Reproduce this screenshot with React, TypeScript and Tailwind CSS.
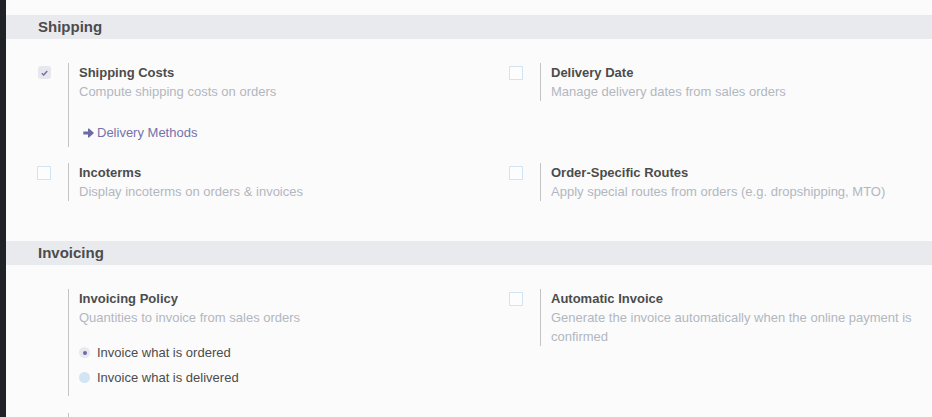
import React from "react";

function Check({ checked }: { checked?: boolean }) {
  if (checked) {
    return (
      <div className="mt-[3px] flex h-[13px] w-[13px] items-center justify-center rounded-[3px] bg-[#e7e8ee]">
        <svg width="7" height="6" viewBox="0 0 7 6">
          <path d="M0.8 3.2 L2.7 5 L6.2 1" fill="none" stroke="#6f6ea6" strokeWidth="1.4" />
        </svg>
      </div>
    );
  }
  return <div className="-ml-px mt-[3px] h-[14px] w-[14px] border border-[#d2e3f1] bg-[#fdfdfd]" />;
}

function Setting({
  title,
  desc,
  checkbox,
  checked,
  children,
}: {
  title?: string;
  desc?: string;
  checkbox?: boolean;
  checked?: boolean;
  children?: React.ReactNode;
}) {
  return (
    <div className="flex items-start">
      <div className="w-[30px] shrink-0 pl-0">{checkbox ? <Check checked={checked} /> : null}</div>
      <div className="border-l border-[#c3c3c3] pl-[10px] pr-2 text-[13px] leading-[19px]">
        {title ? <div className="font-bold text-[#4c4c4c]">{title}</div> : null}
        {desc ? <div className="text-[#b2b7bf]">{desc}</div> : null}
        {children}
      </div>
    </div>
  );
}

function Header({ label }: { label: string }) {
  return (
    <div className="flex h-[24px] items-center bg-[#e9eaee] pl-[32px] text-[15px] font-bold text-[#4c4c4c]">
      {label}
    </div>
  );
}

export default function App() {
  return (
    <div
      className="flex min-h-screen bg-[#fbfbfb]"
      style={{ fontFamily: '"Liberation Sans", Arial, sans-serif' }}
    >
      <div className="w-[6px] shrink-0 bg-[#1f2226]" />
      <div className="flex-1 overflow-hidden pt-[15px]">
        <Header label="Shipping" />
        <div className="grid grid-cols-[472px_1fr] gap-y-4 pb-10 pl-[32px] pt-6">
          <Setting title="Shipping Costs" desc="Compute shipping costs on orders" checkbox checked>
            <div className="mt-[22px] mb-[5px] flex items-center pl-[4px] text-[#7472ab]">
              <svg width="11" height="10" viewBox="0 0 11 10" className="mr-[3px]">
                <path d="M0.3 3.4 H5 V0.8 Q5.3 0.1 6 0.6 L10.5 4.4 Q11 5 10.5 5.6 L6 9.4 Q5.3 9.9 5 9.2 V6.6 H0.3 Z" fill="#6d6ba6" />
              </svg>
              Delivery Methods
            </div>
          </Setting>
          <Setting title="Delivery Date" desc="Manage delivery dates from sales orders" checkbox />
          <Setting title="Incoterms" desc="Display incoterms on orders & invoices" checkbox />
          <Setting
            title="Order-Specific Routes"
            desc="Apply special routes from orders (e.g. dropshipping, MTO)"
            checkbox
          />
        </div>
        <Header label="Invoicing" />
        <div className="grid grid-cols-[472px_1fr] gap-y-[17px] pb-10 pl-[32px] pt-6">
          <Setting title="Invoicing Policy" desc="Quantities to invoice from sales orders">
            <div className="mt-[16px] mb-[9px] flex flex-col gap-[6px] text-[#4c4c4c]">
              <div className="flex items-center">
                <div className="mr-[7px] flex h-[11px] w-[11px] items-center justify-center rounded-full bg-[#e8e9ee]">
                  <div className="h-[4px] w-[4px] rounded-full bg-[#6c6aa3]" />
                </div>
                Invoice what is ordered
              </div>
              <div className="flex items-center">
                <div className="mr-[7px] h-[11px] w-[11px] rounded-full bg-[#d3e5f3]" />
                Invoice what is delivered
              </div>
            </div>
          </Setting>
          <Setting
            title="Automatic Invoice"
            desc="Generate the invoice automatically when the online payment is confirmed"
            checkbox
          />
          <Setting>
            <div className="h-[38px]" />
          </Setting>
          <div />
        </div>
      </div>
    </div>
  );
}
